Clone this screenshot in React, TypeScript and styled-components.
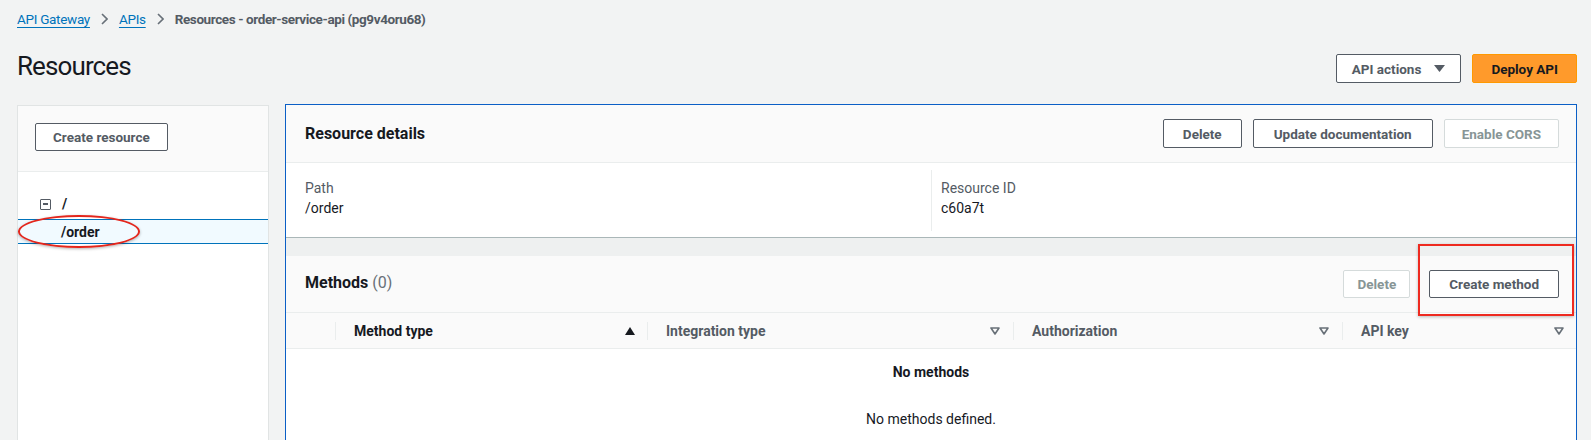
import React from "react";
import styled, { createGlobalStyle } from "styled-components";

const Global = createGlobalStyle`
  html, body { margin: 0; padding: 0; background: #f2f3f3; }
  body {
    font-family: Roboto, "Noto Sans", "Liberation Sans", sans-serif;
    color: #16191f;
    font-size: 14px;
    -webkit-font-smoothing: antialiased;
  }
  * { box-sizing: border-box; }
`;

const Page = styled.div`
  height: 440px;
  overflow: hidden;
  padding: 0 14px 0 17px;
`;

const Breadcrumbs = styled.nav`
  display: flex;
  align-items: center;
  height: 38px;
  font-size: 13.5px;
`;

const Crumb = styled.a`
  color: #0073bb;
  text-decoration: underline;
  text-underline-offset: 3px;
  text-decoration-thickness: 1px;
  letter-spacing: -0.3px;
  cursor: pointer;
`;

const Chevron = styled.span`
  display: inline-flex;
  align-items: center;
  margin: 0 11px;
  color: #687078;
`;

const Current = styled.span`
  font-weight: 700;
  color: #545b64;
  letter-spacing: -0.4px;
`;

const HeaderRow = styled.div`
  display: flex;
  justify-content: space-between;
  align-items: flex-start;
  height: 66px;
`;

const Title = styled.h1`
  margin: 10px 0 0;
  font-size: 26px;
  line-height: 36px;
  font-weight: 400;
  letter-spacing: -0.9px;
  color: #16191f;
`;

const Actions = styled.div`
  display: flex;
  gap: 11px;
  margin-top: 16px;
`;

type Variant = "normal" | "primary" | "disabled";

const Button = styled.button<{ $variant?: Variant; $h?: number; $px?: number }>`
  height: ${(p) => p.$h ?? 29}px;
  padding: 0 ${(p) => p.$px ?? 19}px;
  border-radius: 2px;
  font-family: inherit;
  font-size: 13.5px;
  font-weight: 700;
  display: inline-flex;
  align-items: center;
  justify-content: center;
  gap: 13px;
  white-space: nowrap;
  cursor: pointer;
  border: 1px solid
    ${(p) =>
      p.$variant === "primary"
        ? "#ff9900"
        : p.$variant === "disabled"
        ? "#d5dbdb"
        : "#545b64"};
  background: ${(p) => (p.$variant === "primary" ? "#ff9a2b" : "#ffffff")};
  color: ${(p) =>
    p.$variant === "primary"
      ? "#16191f"
      : p.$variant === "disabled"
      ? "#879596"
      : "#545b64"};
`;

const Main = styled.div`
  display: grid;
  grid-template-columns: 252px 1fr;
  column-gap: 16px;
  align-items: start;
`;

const LeftPanel = styled.aside`
  margin-top: 1px;
  height: 400px;
  background: #ffffff;
  border: 1px solid #e1e4e4;
`;

const LeftTop = styled.div`
  height: 66px;
  display: flex;
  align-items: flex-start;
  padding: 17px 0 0 17px;
  background: #fafafa;
  border-bottom: 1px solid #eaeded;
`;

const Tree = styled.div`
  padding-top: 20px;
`;

const TreeRow = styled.div<{ $selected?: boolean }>`
  position: relative;
  display: flex;
  align-items: center;
  gap: 11px;
  height: ${(p) => (p.$selected ? 25 : 24)}px;
  margin-top: ${(p) => (p.$selected ? 3 : 0)}px;
  padding-left: ${(p) => (p.$selected ? 43 : 22)}px;
  font-weight: 700;
  font-size: 14px;
  color: #16191f;
  background: ${(p) => (p.$selected ? "#f1faff" : "transparent")};
  border-top: ${(p) => (p.$selected ? "1px solid #0073bb" : "none")};
  border-bottom: ${(p) => (p.$selected ? "1px solid #0073bb" : "none")};
`;

const Collapse = styled.span`
  width: 11px;
  height: 11px;
  border: 1.5px solid #545b64;
  border-radius: 1px;
  display: inline-flex;
  align-items: center;
  justify-content: center;
  &::after {
    content: "";
    width: 5px;
    height: 1.5px;
    background: #545b64;
  }
`;

const Ellipse = styled.span`
  position: absolute;
  left: 0;
  top: -5px;
  width: 122px;
  height: 33px;
  border: 2px solid #e3261c;
  border-radius: 50%;
  box-shadow: 0 1px 3px rgba(0, 0, 0, 0.3);
  pointer-events: none;
`;

const RightPanel = styled.section`
  border: 1px solid #0b5fc6;
  border-bottom: none;
  background: #eef0f0;
  display: flex;
  flex-direction: column;
  gap: 18px;
  height: 340px;
`;

const Card = styled.div<{ $grow?: boolean }>`
  background: #ffffff;
  flex: ${(p) => (p.$grow ? 1 : "none")};
  border-bottom: ${(p) => (p.$grow ? "none" : "1px solid #aab7b8")};
`;

const CardHeader = styled.div<{ $h: number }>`
  height: ${(p) => p.$h}px;
  background: #fafafa;
  border-bottom: 1px solid #eaeded;
  display: flex;
  align-items: center;
  justify-content: space-between;
  padding: 0 17px 0 19px;
`;

const H2 = styled.h2<{ $lift?: number }>`
  margin: 0 0 ${(p) => p.$lift ?? 0}px;
  font-size: 16px;
  font-weight: 700;
  color: #16191f;
`;

const Count = styled.span`
  font-weight: 400;
  color: #687078;
`;

const ButtonRow = styled.div<{ $gap: number }>`
  display: flex;
  gap: ${(p) => p.$gap}px;
  align-items: center;
`;

const DetailGrid = styled.div`
  display: grid;
  grid-template-columns: 1fr 1fr;
  height: 74px;
  padding: 7px 0 6px;
`;

const DetailCol = styled.div<{ $first?: boolean }>`
  padding: 8px 0 0 ${(p) => (p.$first ? 19 : 9)}px;
  border-left: ${(p) => (p.$first ? "none" : "1px solid #eaeded")};
`;

const Label = styled.div`
  font-size: 14px;
  line-height: 20px;
  color: #545b64;
`;

const Value = styled.div`
  font-size: 14px;
  line-height: 20px;
  color: #16191f;
`;

const Highlight = styled.span`
  position: relative;
  display: inline-flex;
  &::after {
    content: "";
    position: absolute;
    top: -26px;
    left: -11px;
    right: -15px;
    bottom: -18px;
    border: 2px solid #ee2a20;
    box-shadow: 0 1px 3px rgba(0, 0, 0, 0.25);
    pointer-events: none;
  }
`;

const TableHead = styled.div`
  display: grid;
  grid-template-columns: 49px 312px 366px 329px 1fr;
  height: 36px;
  background: #fafafa;
  border-bottom: 1px solid #eaeded;
`;

const Th = styled.div<{ $divider?: boolean; $pr?: number }>`
  position: relative;
  display: flex;
  align-items: center;
  justify-content: space-between;
  padding: 0 ${(p) => p.$pr ?? 13}px 0 19px;
  font-weight: 700;
  font-size: 14px;
  color: #545b64;
  &::before {
    content: "";
    display: ${(p) => (p.$divider ? "block" : "none")};
    position: absolute;
    left: 0;
    top: 9px;
    bottom: 8px;
    width: 1px;
    background: #eaeded;
  }
`;

const HeadLabel = styled.span<{ $dark?: boolean }>`
  color: ${(p) => (p.$dark ? "#16191f" : "#545b64")};
`;

const Empty = styled.div`
  display: flex;
  flex-direction: column;
  align-items: center;
  padding-top: 13px;
  font-size: 14px;
  line-height: 20px;
`;

const EmptyTitle = styled.div`
  font-weight: 700;
  color: #16191f;
`;

const EmptyText = styled.div`
  margin-top: 27px;
  color: #16191f;
`;

const ChevronIcon = () => (
  <svg width="7" height="12" viewBox="0 0 7 12">
    <polyline points="1,1 6,6 1,11" fill="none" stroke="#687078" strokeWidth="1.6" />
  </svg>
);

const CaretDown = () => (
  <svg width="11" height="7" viewBox="0 0 11 7">
    <polygon points="0,0 11,0 5.5,7" fill="#545b64" />
  </svg>
);

const SortUp = () => (
  <svg width="10" height="8" viewBox="0 0 10 8">
    <polygon points="0,8 10,8 5,0" fill="#16191f" />
  </svg>
);

const SortDown = () => (
  <svg width="10" height="8" viewBox="0 0 10 8">
    <polygon points="1,1 9,1 5,7" fill="none" stroke="#687078" strokeWidth="1.6" strokeLinejoin="round" />
  </svg>
);

export default function App() {
  return (
    <>
      <Global />
      <Page>
        <Breadcrumbs>
          <Crumb>API Gateway</Crumb>
          <Chevron>
            <ChevronIcon />
          </Chevron>
          <Crumb>APIs</Crumb>
          <Chevron>
            <ChevronIcon />
          </Chevron>
          <Current>Resources - order-service-api (pg9v4oru68)</Current>
        </Breadcrumbs>

        <HeaderRow>
          <Title>Resources</Title>
          <Actions>
            <Button $px={15}>
              API actions
              <CaretDown />
            </Button>
            <Button $variant="primary" $px={18}>
              Deploy API
            </Button>
          </Actions>
        </HeaderRow>

        <Main>
          <LeftPanel>
            <LeftTop>
              <Button $h={28} $px={17}>
                Create resource
              </Button>
            </LeftTop>
            <Tree>
              <TreeRow>
                <Collapse />
                <span>/</span>
              </TreeRow>
              <TreeRow $selected>
                <span>/order</span>
                <Ellipse />
              </TreeRow>
            </Tree>
          </LeftPanel>

          <RightPanel>
            <Card>
              <CardHeader $h={58}>
                <H2>Resource details</H2>
                <ButtonRow $gap={11}>
                  <Button>Delete</Button>
                  <Button $px={20}>Update documentation</Button>
                  <Button $variant="disabled" $px={17}>
                    Enable CORS
                  </Button>
                </ButtonRow>
              </CardHeader>
              <DetailGrid>
                <DetailCol $first>
                  <Label>Path</Label>
                  <Value>/order</Value>
                </DetailCol>
                <DetailCol>
                  <Label>Resource ID</Label>
                  <Value>c60a7t</Value>
                </DetailCol>
              </DetailGrid>
            </Card>

            <Card $grow>
              <CardHeader $h={57}>
                <H2 $lift={3}>
                  Methods <Count>(0)</Count>
                </H2>
                <ButtonRow $gap={19}>
                  <Button $variant="disabled" $h={28} $px={13}>
                    Delete
                  </Button>
                  <Highlight>
                    <Button $h={28}>Create method</Button>
                  </Highlight>
                </ButtonRow>
              </CardHeader>
              <TableHead>
                <Th />
                <Th $divider $pr={12}>
                  <HeadLabel $dark>Method type</HeadLabel>
                  <SortUp />
                </Th>
                <Th $divider>
                  <HeadLabel>Integration type</HeadLabel>
                  <SortDown />
                </Th>
                <Th $divider>
                  <HeadLabel>Authorization</HeadLabel>
                  <SortDown />
                </Th>
                <Th $divider $pr={12}>
                  <HeadLabel>API key</HeadLabel>
                  <SortDown />
                </Th>
              </TableHead>
              <Empty>
                <EmptyTitle>No methods</EmptyTitle>
                <EmptyText>No methods defined.</EmptyText>
              </Empty>
            </Card>
          </RightPanel>
        </Main>
      </Page>
    </>
  );
}
